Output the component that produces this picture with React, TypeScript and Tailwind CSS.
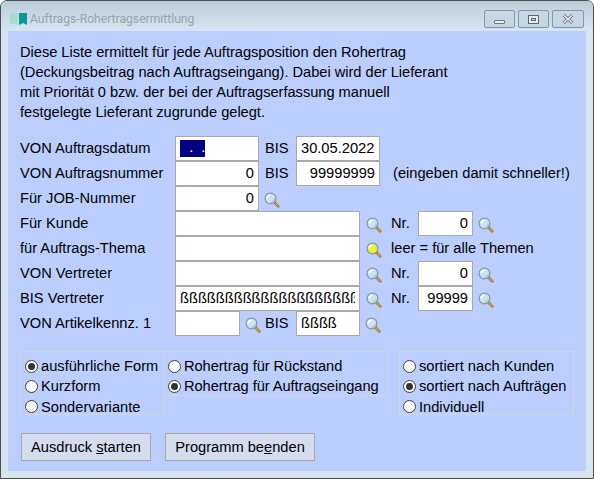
import type { ReactNode } from 'react';

function Lens({ yellow = false }: { yellow?: boolean }) {
  return (
    <svg width="17" height="17" viewBox="0 0 17 17" className="shrink-0 translate-y-[2px]">
      <path d="M10.5 10.5 L14.3 14.3" stroke="#8a6a1e" strokeWidth="2.6" strokeLinecap="round" />
      <path d="M10.8 10.8 L14.2 14.2" stroke="#e8b84a" strokeWidth="1.2" strokeLinecap="round" />
      <circle cx="6.5" cy="6.5" r="5.4" fill={yellow ? '#f0ee3c' : '#cfe2ee'} stroke="#7d98a8" strokeWidth="1.2" />
      <path d="M3.2 6.5 A3.3 3.3 0 0 1 6.5 3.2" fill="none" stroke="#ffffff" strokeWidth="1.4" />
      {!yellow && <path d="M6.5 10.3 A3.8 3.8 0 0 0 10.3 6.5" fill="none" stroke="#9fbccd" strokeWidth="1.2" />}
    </svg>
  );
}

function Field({ w, right, children }: { w: string; right?: boolean; children?: ReactNode }) {
  return (
    <div className={`h-[25px] shrink-0 border border-[#a9a9a9] bg-white px-[4px] leading-[23px] ${w} ${right ? 'text-right' : ''}`}>
      <div className="h-full overflow-hidden whitespace-nowrap">{children}</div>
    </div>
  );
}

function Row({ label, children }: { label: string; children: ReactNode }) {
  return (
    <div className="flex h-[25px] items-center">
      <div className="w-[155px] shrink-0 -translate-y-[1px]">{label}</div>
      {children}
    </div>
  );
}

function Radio({ label, on, h = 'h-[20px]' }: { label: string; on?: boolean; h?: string }) {
  return (
    <div className={`flex items-center whitespace-nowrap ${h}`}>
      <span className="mr-[3px] flex h-[13px] w-[13px] shrink-0 items-center justify-center rounded-full border border-[#3c3c3c] bg-white">
        {on && <span className="h-[7px] w-[7px] rounded-full bg-[#333333]" />}
      </span>
      {label}
    </div>
  );
}

export default function App() {
  return (
    <div className="h-[479px] w-[594px] overflow-hidden bg-white font-['Liberation_Sans',sans-serif] text-[14.67px] text-black">
      <div className="flex h-full flex-col rounded-t-[7px] border border-[#4d4d4d] bg-[#d7e5f1]">
        {/* title bar */}
        <div className="flex h-[30px] shrink-0 items-center rounded-t-[6px] bg-gradient-to-b from-[#bccdda] to-[#d7e5f1] pl-[9px] pr-[9px]">
          <svg width="17" height="13" viewBox="0 0 17 13" className="mt-[6px] shrink-0">
            <path d="M0 0 H8 V12 L4 10 L0 12 Z" fill="#a5dcd4" />
            <path d="M9 0 H17 V12 L13 10 L9 12 Z" fill="#0a9a96" />
          </svg>
          <span className="ml-[3px] mt-[7px] font-['Roboto',sans-serif] text-[12.15px] text-[#98a2aa]">
            Auftrags-Rohertragsermittlung
          </span>
          <div className="ml-auto mt-[6px] flex gap-[3px]">
            <div className="flex h-[18px] w-[31px] items-center justify-center rounded-[2px] border border-[#8496a8] bg-[#c6d6e2]">
              <span className="mt-[6px] h-[4px] w-[11px] rounded-[1px] border border-[#6c7680] bg-[#e8edf2]" />
            </div>
            <div className="flex h-[18px] w-[31px] items-center justify-center rounded-[2px] border border-[#8496a8] bg-[#c6d6e2]">
              <span className="flex h-[9px] w-[11px] items-center justify-center border border-[#5c6670] bg-[#e8edf2]">
                <span className="h-[3px] w-[5px] border border-[#5c6670] bg-[#c6d6e2]" />
              </span>
            </div>
            <div className="flex h-[18px] w-[32px] items-center justify-center rounded-[2px] border border-[#8496a8] bg-[#c6d6e2]">
              <svg width="12" height="10" viewBox="0 0 12 10">
                <path d="M1.5 1 L10.5 9 M10.5 1 L1.5 9" stroke="#5c6670" strokeWidth="3" />
                <path d="M1.5 1 L10.5 9 M10.5 1 L1.5 9" stroke="#f0f3f6" strokeWidth="1.4" />
              </svg>
            </div>
          </div>
        </div>

        {/* client area */}
        <div className="mx-[7px] mb-[7px] flex-1 bg-[#bbcefe] pl-[12px] pt-[11px]">
          <p className="leading-[20px] tracking-[-0.03px]">
            Diese Liste ermittelt für jede Auftragsposition den Rohertrag
            <br />
            (Deckungsbeitrag nach Auftragseingang). Dabei wird der Lieferant
            <br />
            mit Priorität 0 bzw. der bei der Auftragserfassung manuell
            <br />
            festgelegte Lieferant zugrunde gelegt.
          </p>

          <div className="mt-[14px]">
            <Row label="VON Auftragsdatum">
              <Field w="w-[84px]">
                <span className="mt-[3px] block h-[17px] w-[25px] whitespace-pre bg-[#000080] pl-[1px] leading-[15px] text-white">{'  .  .'}</span>
              </Field>
              <span className="ml-[6px] w-[31px] -translate-y-[1px]">BIS</span>
              <Field w="w-[84px]">30.05.2022</Field>
            </Row>
            <Row label="VON Auftragsnummer">
              <Field w="w-[84px]" right>0</Field>
              <span className="ml-[6px] w-[31px] -translate-y-[1px]">BIS</span>
              <Field w="w-[84px]" right>99999999</Field>
              <span className="ml-[13px] -translate-y-[1px]">(eingeben damit schneller!)</span>
            </Row>
            <Row label="Für JOB-Nummer">
              <Field w="w-[84px]" right>0</Field>
              <span className="ml-[5px]"><Lens /></span>
            </Row>
            <Row label="Für Kunde">
              <Field w="w-[185px]" />
              <span className="ml-[6px]"><Lens /></span>
              <span className="ml-[8px] w-[27px] -translate-y-[1px]">Nr.</span>
              <Field w="w-[55px]" right>0</Field>
              <span className="ml-[5px]"><Lens /></span>
            </Row>
            <Row label="für Auftrags-Thema">
              <Field w="w-[185px]" />
              <span className="ml-[6px]"><Lens yellow /></span>
              <span className="ml-[8px] -translate-y-[1px]">leer = für alle Themen</span>
            </Row>
            <Row label="VON Vertreter">
              <Field w="w-[185px]" />
              <span className="ml-[6px]"><Lens /></span>
              <span className="ml-[8px] w-[27px] -translate-y-[1px]">Nr.</span>
              <Field w="w-[55px]" right>0</Field>
              <span className="ml-[5px]"><Lens /></span>
            </Row>
            <Row label="BIS Vertreter">
              <Field w="w-[185px]">ßßßßßßßßßßßßßßßßßßßßßß</Field>
              <span className="ml-[6px]"><Lens /></span>
              <span className="ml-[8px] w-[27px] -translate-y-[1px]">Nr.</span>
              <Field w="w-[55px]" right>99999</Field>
              <span className="ml-[5px]"><Lens /></span>
            </Row>
            <Row label="VON Artikelkennz. 1">
              <Field w="w-[65px]" />
              <span className="ml-[5px]"><Lens /></span>
              <span className="ml-[3px] w-[31px] -translate-y-[1px]">BIS</span>
              <Field w="w-[64px]">ßßßß</Field>
              <span className="ml-[5px]"><Lens /></span>
            </Row>
          </div>

          {/* option groups */}
          <div className="mt-[15px] flex items-start">
            <div className="h-[64px] w-[145px] border border-[#d0d6e4] pl-[4px] pt-[4px]">
              <Radio label="ausführliche Form" on />
              <Radio label="Kurzform" />
              <Radio label="Sondervariante" h="h-[21px]" />
            </div>
            <div className="-ml-[1px] h-[45px] w-[224px] border border-[#d0d6e4] pl-[3px] pt-[4px] tracking-[-0.06px]">
              <Radio label="Rohertrag für Rückstand" />
              <Radio label="Rohertrag für Auftragseingang" on />
            </div>
            <div className="ml-[11px] h-[64px] w-[175px] border border-[#d0d6e4] pl-[3px] pt-[4px]">
              <Radio label="sortiert nach Kunden" />
              <Radio label="sortiert nach Aufträgen" on />
              <Radio label="Individuell" h="h-[21px]" />
            </div>
          </div>

          {/* buttons */}
          <div className="ml-[1px] mt-[18px] flex gap-[14px]">
            <button className="h-[28px] w-[130px] border border-[#a9a9a9] bg-[#d5dcee] pb-[1px]">
              Ausdruck <u>s</u>tarten
            </button>
            <button className="h-[28px] w-[150px] border border-[#a9a9a9] bg-[#d5dcee] pb-[1px]">
              Programm be<u>e</u>nden
            </button>
          </div>
        </div>
      </div>
    </div>
  );
}
